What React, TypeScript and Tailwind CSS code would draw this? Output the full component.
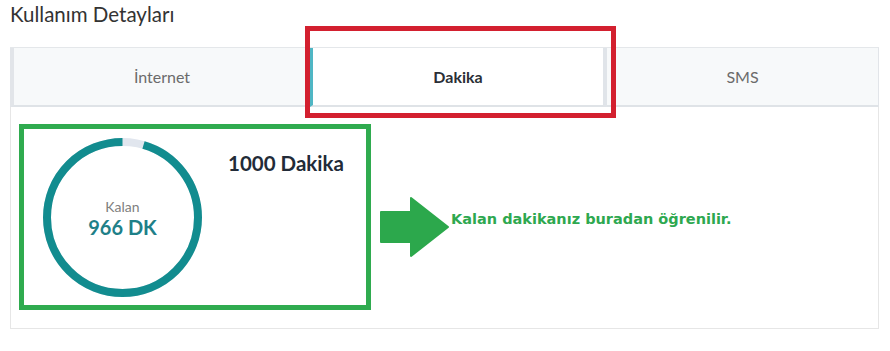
import React from "react";

// Usage data shown in the donut
const usage = {
  total: 1000,
  remaining: 966,
};

const Donut = () => {
  const size = 159;
  const stroke = 8;
  const r = (size - stroke) / 2;
  const c = 2 * Math.PI * r;
  const usedPart = 0.045; // visible gray slice at the top
  return (
    <div className="relative w-[159px] h-[159px] shrink-0">
      <svg width={size} height={size} viewBox={`0 0 ${size} ${size}`} className="-rotate-90">
        <circle cx={size / 2} cy={size / 2} r={r} fill="none" stroke="#e1e6ee" strokeWidth={stroke} />
        <circle
          cx={size / 2}
          cy={size / 2}
          r={r}
          fill="none"
          stroke="#128c8f"
          strokeWidth={stroke}
          strokeDasharray={`${c * (1 - usedPart)} ${c}`}
          strokeDashoffset={-c * usedPart}
        />
      </svg>
      <div className="absolute inset-0 flex flex-col items-center justify-center pt-[2px]">
        <span className="text-[14px] leading-[16px] text-[#808080]">Kalan</span>
        <span className="text-[20px] leading-[24px] font-bold text-[#1e8088]">{usage.remaining} DK</span>
      </div>
    </div>
  );
};

const Arrow = () => (
  <svg width="70" height="62" viewBox="0 0 70 62" className="shrink-0">
    <path d="M2 16 H32 V2 L69 31 L32 60 V46 H2 Z" fill="#2ca84c" stroke="#2ca84c" strokeWidth="2" strokeLinejoin="round" />
  </svg>
);

export default function App() {
  return (
    <div className="relative w-[890px] h-[351px] bg-white font-['Lato','Noto_Sans',sans-serif]">
      <h1 className="pl-[10px] pt-[1px] text-[20.5px] leading-[26px] text-[#333]">Kullanım Detayları</h1>

      <div className="ml-[10px] mt-[20px] w-[869px]">
        {/* Tabs */}
        <div className="flex h-[60px] border-t border-[#e4e7ea] bg-[#f7f9fa]">
          <div className="w-[300px] flex items-center justify-center border-l-4 border-[#e2e5e9] border-b-2 border-b-[#dfe3e7] text-[16px] text-[#6b6b6b]">
            İnternet
          </div>
          <div className="w-[297px] flex items-center justify-center bg-white border-l-[3px] border-l-[#4fb6c4] border-r-4 border-r-[#e0e4e9] border-b-2 border-b-[#dfe3e7] text-[16px] font-bold text-[#2b2f36]">
            Dakika
          </div>
          <div className="flex-1 flex items-center justify-center border-r border-[#e2e5e9] border-b-2 border-b-[#dfe3e7] text-[16px] text-[#6b6b6b]">
            SMS
          </div>
        </div>

        {/* Content */}
        <div className="h-[222px] border border-t-0 border-[#e6e6e6] pl-[8px] pt-[17px] flex items-start">
          <div className="w-[352px] h-[186px] border-[5px] border-[#2fab4f] flex items-start pl-[19px] pt-[9px]">
            <Donut />
            <div className="ml-[26px] mt-[13px] text-[20.5px] leading-[24px] font-bold text-[#222b38]">
              {usage.total} Dakika
            </div>
          </div>
          <div className="flex items-center ml-[8px] mt-[72px]">
            <Arrow />
            <span className="ml-[2px] -mt-[14px] font-['DejaVu_Sans',sans-serif] text-[14.5px] font-bold text-[#2ea84f]">
              Kalan dakikanız buradan öğrenilir.
            </span>
          </div>
        </div>
      </div>

      {/* Annotation around active tab */}
      <div className="absolute left-[305px] top-[26px] w-[311px] h-[92px] border-[5px] border-[#d3202f] pointer-events-none" />
    </div>
  );
}
